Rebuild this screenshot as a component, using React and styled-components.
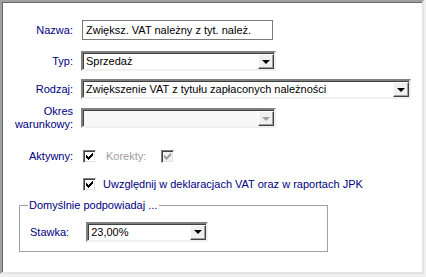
import React from 'react';
import styled, { createGlobalStyle } from 'styled-components';

const navy = '#000080';

const Global = createGlobalStyle`
  html, body { margin: 0; padding: 0; background: #f0f0f0; }
  body { font-family: "Liberation Sans", Arial, sans-serif; font-size: 11px; }
`;

const Panel = styled.div`
  width: 424px;
  height: 274px;
  box-sizing: border-box;
  background: #fff;
  border-style: solid;
  border-width: 2px;
  border-color: #a0a0a0 #e3e3e3 #e3e3e3 #a0a0a0;
  box-shadow: inset 1px 1px 0 #696969;
  padding-top: 18px;
`;

const Row = styled.div`
  display: flex;
  align-items: center;
  height: ${p => p.$h || 20}px;
  margin-top: ${p => p.$top || 0}px;
`;

const Label = styled.div`
  width: 71px;
  flex: none;
  text-align: right;
  color: ${p => (p.$disabled ? '#a0a0a0' : navy)};
  line-height: 13px;
  margin-right: ${p => p.$gap ?? 9}px;
`;

const TextInput = styled.div`
  width: 191px;
  height: 20px;
  box-sizing: border-box;
  border: 1px solid #7a7a7a;
  padding: 0 3px;
  display: flex;
  align-items: center;
  color: #000;
  white-space: nowrap;
`;

const Combo = styled.div`
  width: ${p => p.$w}px;
  height: ${p => p.$h || 20}px;
  box-sizing: border-box;
  display: flex;
  align-items: stretch;
  border-style: solid;
  border-width: 2px;
  border-color: #808080 #f0f0f0 #f0f0f0 #808080;
  box-shadow: inset 1px 1px 0 #404040;
  background: ${p => (p.$disabled ? '#f7f7f7' : '#fff')};
  margin-left: ${p => p.$ml || 0}px;
`;

const ComboText = styled.div`
  flex: 1;
  display: flex;
  align-items: center;
  padding-left: 3px;
  white-space: nowrap;
  overflow: hidden;
  color: #000;
`;

const DropButton = styled.div`
  width: 16px;
  flex: none;
  box-sizing: border-box;
  margin: 1px 0 0 0;
  background: #f0f0f0;
  border-style: solid;
  border-width: 1px;
  border-color: #fff #404040 #404040 #fff;
  box-shadow: inset -1px -1px 0 #a0a0a0;
  display: flex;
  align-items: center;
  justify-content: center;
`;

const Arrow = styled.div`
  width: 0;
  height: 0;
  border-left: 4px solid transparent;
  border-right: 4px solid transparent;
  border-top: 4px solid ${p => (p.$disabled ? '#a0a0a0' : '#000')};
`;

const Check = styled.div`
  width: 13px;
  height: 13px;
  box-sizing: border-box;
  flex: none;
  border-style: solid;
  border-width: 1px;
  border-color: #808080 #fff #fff #808080;
  box-shadow: inset 1px 1px 0 #404040, inset -1px -1px 0 #e3e3e3;
  background: ${p => (p.$disabled ? '#f0f0f0' : '#fff')};
  display: flex;
  align-items: center;
  justify-content: center;
  margin-left: ${p => p.$ml || 0}px;
`;

const CheckText = styled.span`
  color: ${p => (p.$disabled ? '#a0a0a0' : navy)};
  margin-left: ${p => p.$ml || 0}px;
  white-space: nowrap;
`;

const Group = styled.fieldset`
  margin: 8px 0 0 17px;
  width: 309px;
  height: 53px;
  box-sizing: border-box;
  border: 1px solid #a0a0a0;
  padding: 0;
`;

const Legend = styled.legend`
  color: ${navy};
  padding: 0 2px 0 1px;
  margin-left: 8px;
  line-height: 13px;
`;

const GroupRow = styled.div`
  display: flex;
  align-items: center;
  height: 19px;
  margin-top: 10px;
  padding-left: 10px;
`;

const Tick = ({ color = '#000' }) => (
  <svg width="7" height="7" viewBox="0 0 7 7">
    <path d="M0 2h1v1h1v1h1v-1h1v-1h1v-1h1v-1h1v3h-1v1h-1v1h-1v1h-1v1h-1v-1h-1v-1h-1z" fill={color} />
  </svg>
);

const Dropdown = ({ w, h, value, disabled, ml }) => (
  <Combo $w={w} $h={h} $disabled={disabled} $ml={ml}>
    <ComboText>{value}</ComboText>
    <DropButton>
      <Arrow $disabled={disabled} />
    </DropButton>
  </Combo>
);

export default function App() {
  return (
    <>
      <Global />
      <Panel>
        <Row>
          <Label>Nazwa:</Label>
          <TextInput>Zwiększ. VAT należny z tyt. należ.</TextInput>
        </Row>
        <Row $top={11}>
          <Label $gap={8}>Typ:</Label>
          <Dropdown w={195} value="Sprzedaż" />
        </Row>
        <Row $top={8}>
          <Label $gap={8}>Rodzaj:</Label>
          <Dropdown w={330} value="Zwiększenie VAT z tytułu zapłaconych należności" />
        </Row>
        <Row $top={8} $h={22}>
          <Label $gap={8}>Okres warunkowy:</Label>
          <Dropdown w={195} value="" disabled />
        </Row>
        <Row $top={20} $h={14}>
          <Label $gap={10}>Aktywny:</Label>
          <Check><Tick /></Check>
          <CheckText $disabled $ml={10}>Korekty:</CheckText>
          <Check $disabled $ml={15}><Tick color="#a0a0a0" /></Check>
        </Row>
        <Row $top={14} $h={14}>
          <Label $gap={10} />
          <Check><Tick /></Check>
          <CheckText $ml={7}>Uwzględnij w deklaracjach VAT oraz w raportach JPK</CheckText>
        </Row>
        <Group>
          <Legend>Domyślnie podpowiadaj ...</Legend>
          <GroupRow>
            <CheckText>Stawka:</CheckText>
            <Dropdown w={122} h={20} value="23,00%" ml={17} />
          </GroupRow>
        </Group>
      </Panel>
    </>
  );
}
